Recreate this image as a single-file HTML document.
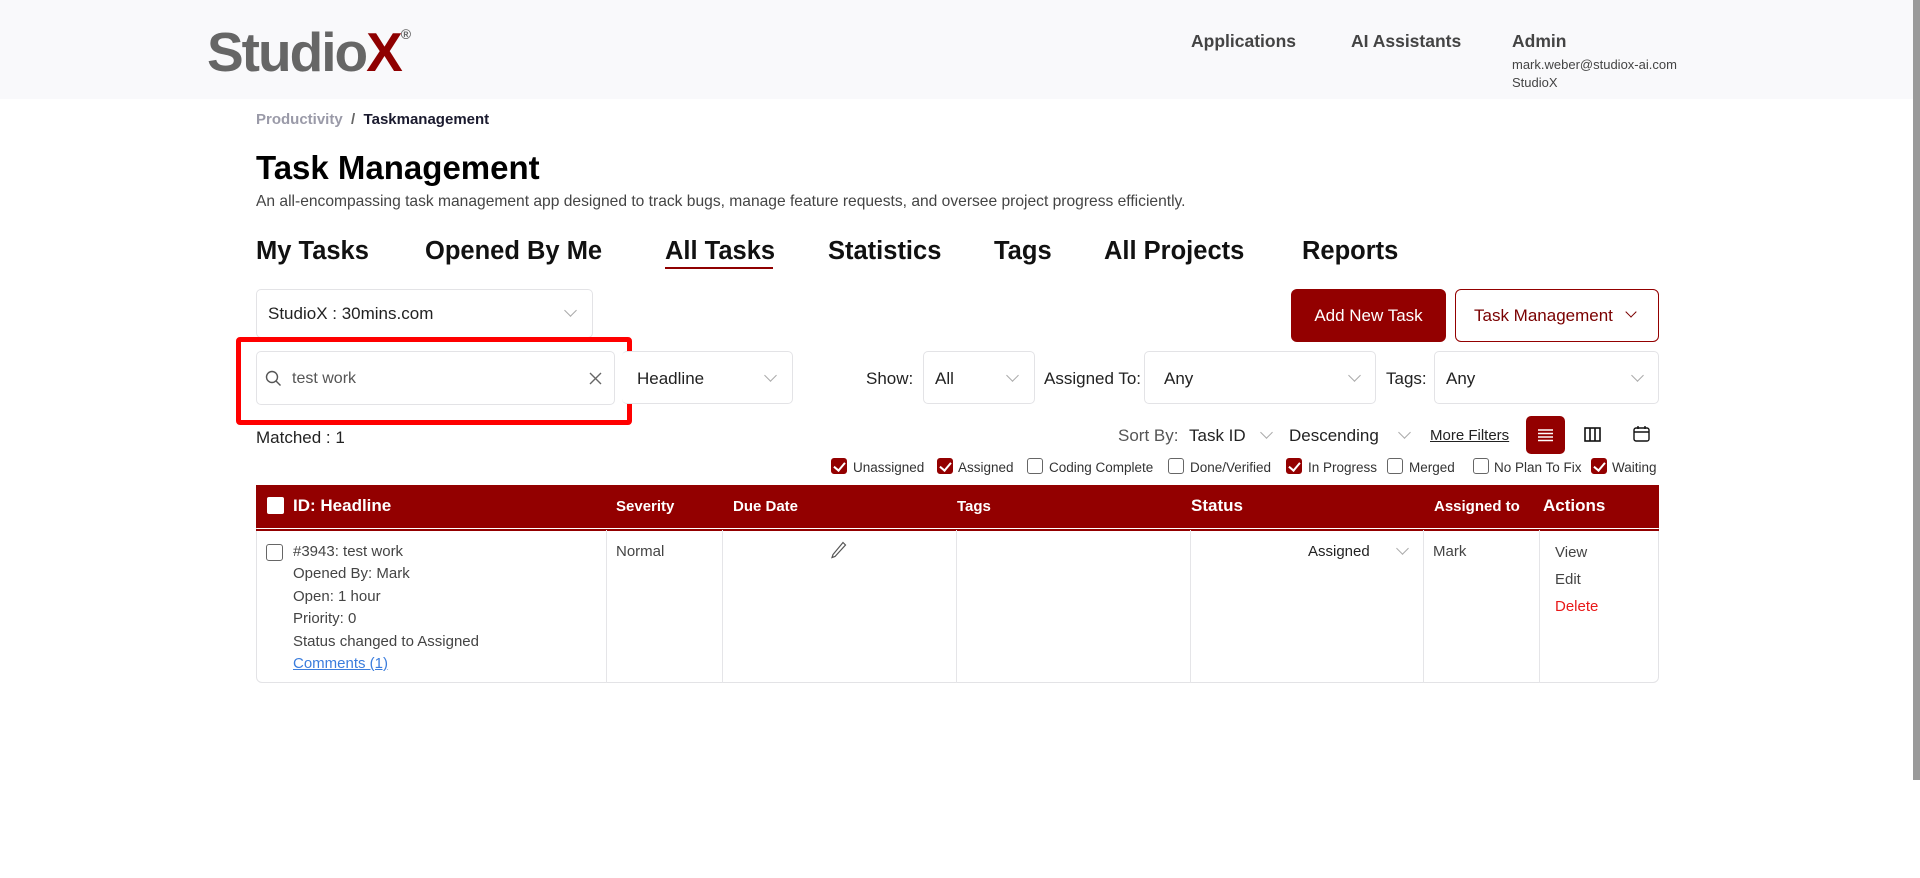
<!DOCTYPE html>
<html><head><meta charset="utf-8"><style>
*{box-sizing:border-box;margin:0;padding:0}
body{width:1920px;height:878px;background:#fff;font-family:"Liberation Sans",sans-serif;color:#222;position:relative;overflow:hidden}
.a{position:absolute;white-space:nowrap}
.hdr{position:absolute;left:0;top:0;width:1920px;height:99px;background:#f9f9fb}
.nav{font-size:17.5px;font-weight:bold;color:#444}
.tab{font-size:25.5px;font-weight:bold;color:#111;top:237px}
.box{position:absolute;border:1px solid #e3e3e6;border-radius:5px;background:#fff}
.chev{position:absolute;width:9px;height:9px;border-right:1.5px solid #aaa;border-bottom:1.5px solid #aaa;transform:rotate(45deg)}
.sel{font-size:17px;color:#222}
.cb{position:absolute;width:16px;height:16px;border:1px solid #666;border-radius:3px;background:#fff}
.cb.on{background:#930000;border-color:#930000}
.cb.on:after{content:"";position:absolute;left:4px;top:1px;width:5px;height:9px;border-right:2px solid #fff;border-bottom:2px solid #fff;transform:rotate(40deg)}
.cl{font-size:13.5px;color:#333;top:460px}
.th{color:#fff;font-weight:bold;top:496px}
.td{font-size:15px;color:#444;line-height:22.4px}
.vl{position:absolute;top:530px;width:1px;height:153px;background:#e5e5e8}
</style></head><body>
<div class="hdr"></div>
<div class="a" style="left:207px;top:20px;font-size:55px;font-weight:bold;color:#666;letter-spacing:-2px">Studio<span style="color:#8f0000">X</span><sup style="font-size:14px;color:#666;vertical-align:top;position:relative;top:6px;letter-spacing:0">®</sup></div>
<div class="a nav" style="left:1191px;top:31px">Applications</div>
<div class="a nav" style="left:1351px;top:31px">AI Assistants</div>
<div class="a nav" style="left:1512px;top:31px">Admin</div>
<div class="a" style="left:1512px;top:57px;font-size:13px;color:#444">mark.weber@studiox-ai.com</div>
<div class="a" style="left:1512px;top:75px;font-size:13px;color:#444">StudioX</div>
<div class="a" style="left:256px;top:111px;font-size:15px;font-weight:bold"><span style="color:#9a9aa8">Productivity</span> <span style="color:#666">&nbsp;/&nbsp;</span> <span style="color:#1a1a2e">Taskmanagement</span></div>
<div class="a" style="left:256px;top:149px;font-size:33px;font-weight:bold;color:#000">Task Management</div>
<div class="a" style="left:256px;top:193px;font-size:15.6px;color:#444">An all-encompassing task management app designed to track bugs, manage feature requests, and oversee project progress efficiently.</div>
<div class="a tab" style="left:256px">My Tasks</div>
<div class="a tab" style="left:425px">Opened By Me</div>
<div class="a tab" style="left:665px">All Tasks</div>
<div class="a" style="left:665px;top:267px;width:108px;height:2px;background:#8f0000"></div>
<div class="a tab" style="left:828px">Statistics</div>
<div class="a tab" style="left:994px">Tags</div>
<div class="a tab" style="left:1104px">All Projects</div>
<div class="a tab" style="left:1302px">Reports</div>

<div class="box" style="left:256px;top:289px;width:337px;height:49px"></div>
<div class="a sel" style="left:268px;top:304px">StudioX : 30mins.com</div>
<div class="chev" style="left:566px;top:306px"></div>
<div class="a" style="left:1291px;top:289px;width:155px;height:53px;background:#930000;border-radius:6px;color:#fff;font-size:17px;text-align:center;line-height:53px">Add New Task</div>
<div class="a" style="left:1455px;top:289px;width:204px;height:53px;border:1px solid #930000;border-radius:6px;color:#7a0000;font-size:17px;line-height:51px;padding-left:18px">Task Management</div>
<div class="chev" style="left:1627px;top:308px;border-color:#7a0000;width:8px;height:8px"></div>

<div class="a" style="left:236px;top:337px;width:396px;height:88px;border:5px solid #ff0000;border-radius:4px"></div>
<div class="box" style="left:256px;top:351px;width:359px;height:54px"></div>
<svg class="a" style="left:265px;top:370px" width="17" height="17" viewBox="0 0 17 17"><circle cx="7" cy="7" r="5.5" fill="none" stroke="#555" stroke-width="1.4"/><path d="M11 11l4.5 4.5" stroke="#555" stroke-width="1.4"/></svg>
<div class="a" style="left:292px;top:370px;font-size:16px;color:#555">test work</div>
<svg class="a" style="left:589px;top:372px" width="13" height="13"><path d="M1 1L12 12M12 1L1 12" stroke="#666" stroke-width="1.4"/></svg>
<div class="box" style="left:622px;top:351px;width:171px;height:53px;border-left:none"></div>
<div class="a sel" style="left:637px;top:369px">Headline</div>
<div class="chev" style="left:766px;top:371px"></div>
<div class="a sel" style="left:866px;top:369px">Show:</div>
<div class="box" style="left:923px;top:351px;width:112px;height:53px"></div>
<div class="a sel" style="left:935px;top:369px">All</div>
<div class="chev" style="left:1008px;top:371px"></div>
<div class="a sel" style="left:1044px;top:369px">Assigned To:</div>
<div class="box" style="left:1144px;top:351px;width:232px;height:53px"></div>
<div class="a sel" style="left:1164px;top:369px">Any</div>
<div class="chev" style="left:1350px;top:371px"></div>
<div class="a sel" style="left:1386px;top:369px">Tags:</div>
<div class="box" style="left:1434px;top:351px;width:225px;height:53px"></div>
<div class="a sel" style="left:1446px;top:369px">Any</div>
<div class="chev" style="left:1633px;top:371px"></div>

<div class="a" style="left:256px;top:428px;font-size:17px;color:#222">Matched : 1</div>
<div class="a" style="left:1118px;top:426px;font-size:17px;color:#555">Sort By:</div>
<div class="a" style="left:1189px;top:426px;font-size:17px;color:#222">Task ID</div>
<div class="chev" style="left:1262px;top:428px"></div>
<div class="a" style="left:1289px;top:426px;font-size:17px;color:#222">Descending</div>
<div class="chev" style="left:1400px;top:428px"></div>
<div class="a" style="left:1430px;top:427px;font-size:15px;color:#222;text-decoration:underline">More Filters</div>
<div class="a" style="left:1526px;top:416px;width:39px;height:38px;background:#930000;border-radius:5px"></div>
<svg class="a" style="left:1538px;top:428px" width="15" height="14"><path d="M0 2h15M0 5.5h15M0 9h15M0 12.5h15" stroke="#fff" stroke-width="1.4"/></svg>
<svg class="a" style="left:1584px;top:427px" width="17" height="15"><rect x="1" y="1" width="15" height="13" fill="none" stroke="#111" stroke-width="1.6"/><path d="M6 1v13M11 1v13" stroke="#111" stroke-width="1.6"/></svg>
<svg class="a" style="left:1633px;top:425px" width="17" height="17"><rect x="1" y="3" width="15" height="13" rx="2" fill="none" stroke="#111" stroke-width="1.4"/><path d="M1 7h15M5 1v3M12 1v3" stroke="#111" stroke-width="1.4"/></svg>

<div class="cb on" style="left:831px;top:458px"></div><div class="a cl" style="left:853px">Unassigned</div>
<div class="cb on" style="left:937px;top:458px"></div><div class="a cl" style="left:958px">Assigned</div>
<div class="cb" style="left:1027px;top:458px"></div><div class="a cl" style="left:1049px">Coding Complete</div>
<div class="cb" style="left:1168px;top:458px"></div><div class="a cl" style="left:1190px">Done/Verified</div>
<div class="cb on" style="left:1286px;top:458px"></div><div class="a cl" style="left:1308px">In Progress</div>
<div class="cb" style="left:1387px;top:458px"></div><div class="a cl" style="left:1409px">Merged</div>
<div class="cb" style="left:1473px;top:458px"></div><div class="a cl" style="left:1494px">No Plan To Fix</div>
<div class="cb on" style="left:1591px;top:458px"></div><div class="a cl" style="left:1612px">Waiting</div>

<div class="a" style="left:256px;top:485px;width:1403px;height:198px;border:1px solid #e3e3e6;border-radius:0 0 6px 6px"></div>
<div class="a" style="left:256px;top:485px;width:1403px;height:43px;background:#930000"></div>
<div class="a" style="left:256px;top:529px;width:1403px;height:2px;background:#930000"></div>
<div class="a" style="left:267px;top:497px;width:17px;height:17px;background:#fff;border-radius:2px"></div>
<div class="a th" style="left:293px;font-size:17px">ID: Headline</div>
<div class="a th" style="left:616px;font-size:15px;top:498px">Severity</div>
<div class="a th" style="left:733px;font-size:15px;top:498px">Due Date</div>
<div class="a th" style="left:957px;font-size:15px;top:498px">Tags</div>
<div class="a th" style="left:1191px;font-size:17px">Status</div>
<div class="a th" style="left:1434px;font-size:15px;top:498px">Assigned to</div>
<div class="a th" style="left:1543px;font-size:17px">Actions</div>
<div class="vl" style="left:606px"></div><div class="vl" style="left:722px"></div><div class="vl" style="left:956px"></div><div class="vl" style="left:1190px"></div><div class="vl" style="left:1423px"></div><div class="vl" style="left:1539px"></div>
<div class="cb" style="left:266px;top:544px;width:17px;height:17px"></div>
<div class="a td" style="left:293px;top:541px">#3943: test work<br>Opened By: Mark<br>Open: 1 hour<br>Priority: 0<br>Status changed to Assigned<br><span style="color:#3b7ddd;text-decoration:underline">Comments (1)</span></div>
<div class="a td" style="left:616px;top:541px">Normal</div>
<svg class="a" style="left:831px;top:541px" width="16" height="18"><path d="M12 1.5l2.5 2.5L4 15.5 1 16.5l1-3z" fill="none" stroke="#555" stroke-width="1.2"/></svg>
<div class="a td" style="left:1308px;top:541px;color:#222">Assigned</div>
<div class="chev" style="left:1398px;top:544px"></div>
<div class="a td" style="left:1433px;top:541px">Mark</div>
<div class="a td" style="left:1555px;top:539px;line-height:27px">View<br>Edit<br><span style="color:#e81818">Delete</span></div>
<div class="a" style="left:1913px;top:0;width:7px;height:780px;background:#9a9a9a"></div>
</body></html>
